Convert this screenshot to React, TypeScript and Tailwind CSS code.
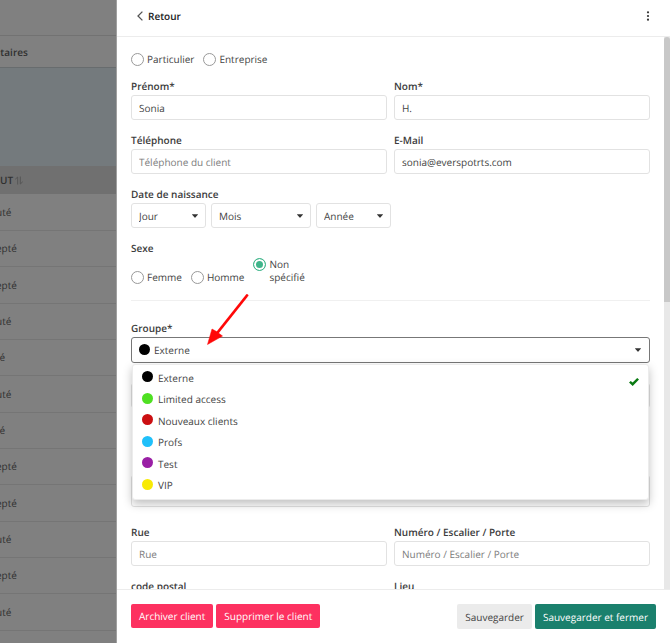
import { useState } from "react"
import type { InputHTMLAttributes, ReactNode } from "react"

const ROWS = ["uté", "epté", "epté", "uté", "té", "uté", "té", "epté", "epté", "uté", "epté", "uté"]

const GROUPS = [
  { name: "Externe",          dot: "bg-black" },
  { name: "Limited access",   dot: "bg-[#4fe022]" },
  { name: "Nouveaux clients", dot: "bg-[#cb0f12]" },
  { name: "Profs",            dot: "bg-[#20c0fa]" },
  { name: "Test",             dot: "bg-[#9a1fa5]" },
  { name: "VIP",              dot: "bg-[#f8ea04]" },
]

const DATE_PARTS = [
  { label: "Jour",  width: "w-[75px]" },
  { label: "Mois",  width: "w-[100px]" },
  { label: "Année", width: "w-[75px]" },
]

const BOX = "h-[25px] w-full rounded-[3px] border border-[#e2e2e2] bg-white px-[7px] text-[#444]"

function Caret({ className = "" }: { className?: string }) {
  return (
    <svg viewBox="0 0 8 5" className={`pointer-events-none h-1 w-1.5 fill-[#333] ${className}`}>
      <path d="M0.6 0h6.8c.5 0 .7.5.4.8L4.5 4.6a.7.7 0 0 1-1 0L.2.8C-.1.5.1 0 .6 0z" />
    </svg>
  )
}

function Field({ id, label, ...props }: { id: string; label: string } & InputHTMLAttributes<HTMLInputElement>) {
  return (
    <div className="min-w-0 flex-1">
      <label htmlFor={id} className="mb-0.5 block font-semibold text-[#3c3c3c]">{label}</label>
      <input id={id} className={`${BOX} placeholder:text-[#7c7c7c]`} {...props} />
    </div>
  )
}

function Radio({ name, children, ...props }: { name: string; children: ReactNode } & InputHTMLAttributes<HTMLInputElement>) {
  return (
    <label className="flex items-start gap-[3px] leading-[13px]">
      <input
        type="radio"
        name={name}
        className="size-[13px] shrink-0 appearance-none rounded-full border border-[#999] bg-white checked:border-[#3fb58a] checked:bg-[#3fb58a] checked:shadow-[inset_0_0_0_2px_white]"
        {...props}
      />
      <span>{children}</span>
    </label>
  )
}

function Backdrop() {
  return (
    <div className="w-[117px] shrink-0 overflow-hidden border-r border-[#a0a0a0] bg-[#808080] text-[#303030]">
      <div className="h-9 border-b border-[#727272]" />
      <div className="flex h-8 items-center border-b border-[#686c6e]">
        <span className="-ml-1.5 font-semibold">ntaires</span>
      </div>
      <div className="h-[98px] bg-[#747a7d]" />
      <table className="w-full border-collapse text-left">
        <thead>
          <tr className="h-7 bg-[#707070]">
            <th className="p-0 font-semibold">
              <div className="flex items-center gap-0.5">
                UT
                <svg viewBox="0 0 8 9" className="h-[9px] w-2 fill-none stroke-[#555]">
                  <path d="M0.300 3.200 2.700 1v7.500M7.700 5.800 5.300 8V.5" />
                </svg>
              </div>
            </th>
          </tr>
        </thead>
        <tbody>
          {ROWS.map((row, i) => (
            <tr key={i} className="h-9 border-b border-[#757575] nth-[3n]:h-[37px]">
              <td className="p-0"><span className="-ml-1">{row}</span></td>
            </tr>
          ))}
        </tbody>
      </table>
    </div>
  )
}

function GroupSelect() {
  const [open, setOpen] = useState(true)
  const [selected, setSelected] = useState(0)

  return (
    <div className="relative">
      <span id="groupe-label" className="mb-0.5 block font-semibold text-[#3c3c3c]">Groupe*</span>
      <button
        type="button"
        aria-haspopup="listbox"
        aria-expanded={open}
        aria-labelledby="groupe-label"
        onClick={() => setOpen(!open)}
        className="flex h-[26px] w-full items-center rounded-[3px] border border-[#777] bg-white pr-2 pl-[7px]"
      >
        <span className={`mb-0.5 mr-1 size-[11px] rounded-full ${GROUPS[selected].dot}`} />
        {GROUPS[selected].name}
        <Caret className="ml-auto" />
      </button>

      {/* Options */}
      {open && (
        <ul
          role="listbox"
          aria-labelledby="groupe-label"
          className="absolute inset-x-px top-full z-10 mt-px rounded-[3px] border border-[#ececec] bg-white pt-0.5 pb-[3px] shadow-[0_4px_10px_rgba(0,0,0,0.25)]"
        >
          {GROUPS.map((group, i) => (
            <li
              key={group.name}
              role="option"
              aria-selected={i === selected}
              onClick={() => { setSelected(i); setOpen(false) }}
              className="flex h-[21px] items-center px-[9px] even:h-[22px]"
            >
              <span className={`mb-0.5 mr-[5px] size-[11px] rounded-full ${group.dot}`} />
              {group.name}
              {i === selected && (
                <svg viewBox="0 0 10 8" className="mt-2 ml-auto h-2 w-2.5 fill-[#0a7a12]">
                  <path d="M0 4.500 1.800 2.900 3.600 4.500 8.200 0 10 1.600 3.700 8z" />
                </svg>
              )}
            </li>
          ))}
        </ul>
      )}
    </div>
  )
}

export default function App() {
  return (
    <div className="relative flex h-screen overflow-hidden bg-white font-['Open_Sans','Noto_Sans',sans-serif] text-[10px] leading-[14px] text-[#444] [text-rendering:geometricPrecision] [&_button]:[text-rendering:inherit] [&_input]:[text-rendering:inherit] [&_select]:[text-rendering:inherit]">
      <Backdrop />

      <section className="flex min-w-0 flex-1 flex-col">
        {/* Header */}
        <header className="flex h-[37px] shrink-0 items-center justify-between border-b border-[#ececec] px-5 pb-1">
          <button type="button" className="flex items-center gap-[5px] font-semibold text-[#222]">
            <svg viewBox="0 0 6 10" className="h-2.5 w-1.5 fill-none stroke-[#555] stroke-[1.3]">
              <path d="M5.4 0.6 1 5l4.4 4.4" />
            </svg>
            Retour
          </button>
          <button type="button" aria-label="Options">
            <svg viewBox="0 0 4 10" className="h-2.5 w-1 fill-[#333]">
              <circle cx="2" cy="1.3" r="1.1" />
              <circle cx="2" cy="5" r="1.1" />
              <circle cx="2" cy="8.7" r="1.1" />
            </svg>
          </button>
        </header>

        {/* Form */}
        <div className="flex min-h-0 flex-1">
          <form className="min-w-0 flex-1 overflow-hidden px-3.5 pt-4">
            <div className="mb-[13px] flex gap-[9px]">
              <Radio name="type">Particulier</Radio>
              <Radio name="type">Entreprise</Radio>
            </div>
            <div className="mb-[13px] flex gap-[7px]">
              <Field id="prenom" label="Prénom*" defaultValue="Sonia" />
              <Field id="nom" label="Nom*" defaultValue="H." />
            </div>
            <div className="mb-[13px] flex gap-[7px]">
              <Field id="telephone" label="Téléphone" placeholder="Téléphone du client" />
              <Field id="email" label="E-Mail" defaultValue="sonia@everspotrts.com" />
            </div>

            <fieldset className="mb-[13px]">
              <legend className="mb-0.5 font-semibold text-[#3c3c3c]">Date de naissance</legend>
              <div className="flex gap-[5px]">
                {DATE_PARTS.map((part) => (
                  <div key={part.label} className={`relative ${part.width}`}>
                    <select aria-label={part.label} className={`${BOX} appearance-none`}>
                      <option>{part.label}</option>
                    </select>
                    <Caret className="absolute top-[11px] right-2" />
                  </div>
                ))}
              </div>
            </fieldset>

            <fieldset className="mb-4">
              <legend className="mb-[3px] font-semibold text-[#3c3c3c]">Sexe</legend>
              <div className="flex items-end gap-[9px]">
                <Radio name="sexe">Femme</Radio>
                <Radio name="sexe">Homme</Radio>
                <Radio name="sexe" defaultChecked>Non<br />spécifié</Radio>
              </div>
            </fieldset>

            <hr className="mb-5 border-[#f0f0f0]" />

            <GroupSelect />

            <input aria-label="Code client" className={`${BOX} mt-5 mb-[67px] block`} />
            <textarea aria-label="Notes" className="mb-[18px] block h-8 w-full resize-none rounded-[3px] border border-[#e2e2e2]" />

            <div className="mb-[13px] flex gap-[7px]">
              <Field id="rue" label="Rue" placeholder="Rue" />
              <Field id="numero" label="Numéro / Escalier / Porte" placeholder="Numéro / Escalier / Porte" />
            </div>
            <div className="flex gap-[7px]">
              <Field id="code-postal" label="code postal" />
              <Field id="lieu" label="Lieu" />
            </div>
          </form>

          {/* Scrollbar */}
          <div className="w-1.5 bg-[#e8e8e8]">
            <div className="h-[48%] rounded-t-sm bg-[#c8c8c8]" />
          </div>
        </div>

        {/* Footer */}
        <footer className="flex h-[54px] shrink-0 items-start gap-[3px] border-t border-[#ececec] px-3.5 pt-3.5">
          <button type="button" className="h-6 rounded-xs bg-[#fd3160] px-2 text-white">Archiver client</button>
          <button type="button" className="h-6 rounded-xs bg-[#fd3160] px-2 text-white">Supprimer le client</button>
          <button type="button" className="ml-auto h-[25px] rounded-xs bg-[#ebebeb] px-2">Sauvegarder</button>
          <button type="button" className="h-[25px] rounded-xs bg-[#1a806d] px-2 text-white">Sauvegarder et fermer</button>
        </footer>
      </section>

      {/* Arrow annotation */}
      <svg viewBox="0 0 42 51" className="pointer-events-none absolute top-[294px] left-[207px] z-20 h-[51px] w-[42px]">
        <path d="M40 1.5 11 38" className="fill-none stroke-[#ff0808] stroke-[2.8]" strokeLinecap="round" />
        <path d="M.5 50.5 5 35l4.500 2.500 6 4.500z" className="fill-[#ff0808] stroke-[#ff0808] stroke-[0.5]" />
      </svg>
    </div>
  )
}
